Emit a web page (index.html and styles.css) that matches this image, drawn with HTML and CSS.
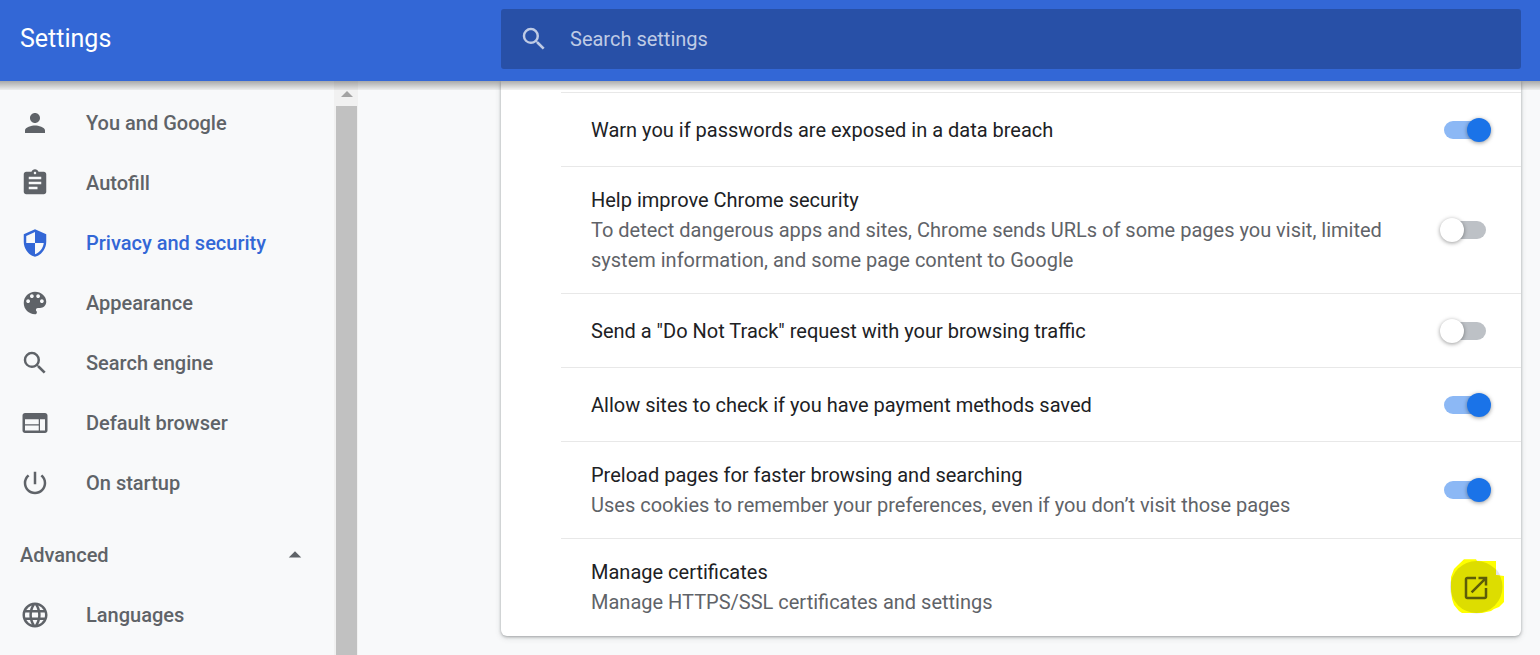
FILE: index.html
```html
<!DOCTYPE html>
<html lang="en">
<head>
<meta charset="utf-8">
<title>Settings</title>
<link rel="stylesheet" href="styles.css">
</head>
<body>
<header class="toolbar">
  <h1 class="toolbar-title">Settings</h1>
  <label class="search">
    <svg class="icon" viewBox="0 0 24 24" aria-hidden="true"><path d="M15.5 14h-.79l-.28-.27A6.471 6.471 0 0 0 16 9.5 6.5 6.5 0 1 0 9.5 16c1.61 0 3.09-.59 4.23-1.57l.27.28v.79l5 4.99L20.49 19l-4.99-5zm-6 0C7.01 14 5 11.99 5 9.5S7.01 5 9.5 5 14 7.01 14 9.5 11.99 14 9.5 14z"/></svg>
    <input class="search-input" type="search" placeholder="Search settings" aria-label="Search settings">
  </label>
</header>
<div class="page">
  <nav class="sidebar" aria-label="Settings sections">
    <div class="menu">
      <a class="menu-item" href="#people"><svg class="icon" viewBox="0 0 24 24" aria-hidden="true"><path d="M12 12c2.21 0 4-1.79 4-4s-1.79-4-4-4-4 1.79-4 4 1.79 4 4 4zm0 2c-2.67 0-8 1.34-8 4v2h16v-2c0-2.66-5.33-4-8-4z"/></svg>You and Google</a>
      <a class="menu-item" href="#autofill"><svg class="icon" viewBox="0 0 24 24" aria-hidden="true"><path d="M19 3h-4.18C14.4 1.84 13.3 1 12 1c-1.3 0-2.4.84-2.82 2H5c-1.1 0-2 .9-2 2v14c0 1.1.9 2 2 2h14c1.1 0 2-.9 2-2V5c0-1.1-.9-2-2-2zm-7 0c.55 0 1 .45 1 1s-.45 1-1 1-1-.45-1-1 .45-1 1-1zm2 14H7v-2h7v2zm3-4H7v-2h10v2zm0-4H7V7h10v2z"/></svg>Autofill</a>
      <a class="menu-item selected" href="#privacy" aria-current="page"><svg class="icon" viewBox="0 0 24 24" aria-hidden="true"><path d="M12 1L3 5v6c0 5.55 3.84 10.74 9 12 5.16-1.26 9-6.45 9-12V5l-9-4zm0 10.99h7c-.53 4.12-3.28 7.79-7 8.94V12H5V6.3l7-3.11v8.8z"/></svg>Privacy and security</a>
      <a class="menu-item" href="#appearance"><svg class="icon" viewBox="0 0 24 24" aria-hidden="true"><path d="M12 3c-4.97 0-9 4.03-9 9s4.03 9 9 9c.83 0 1.5-.67 1.5-1.5 0-.39-.15-.74-.39-1.01-.23-.26-.38-.61-.38-.99 0-.83.67-1.5 1.5-1.5H16c2.76 0 5-2.24 5-5 0-4.42-4.03-8-9-8zm-5.5 9c-.83 0-1.5-.67-1.5-1.5S5.67 9 6.5 9 8 9.67 8 10.5 7.33 12 6.5 12zm3-4C8.67 8 8 7.33 8 6.5S8.67 5 9.5 5s1.5.67 1.5 1.5S10.33 8 9.5 8zm5 0c-.83 0-1.5-.67-1.5-1.5S13.67 5 14.5 5s1.5.67 1.5 1.5S15.33 8 14.5 8zm3 4c-.83 0-1.5-.67-1.5-1.5S16.67 9 17.5 9s1.5.67 1.5 1.5-.67 1.5-1.5 1.5z"/></svg>Appearance</a>
      <a class="menu-item" href="#search"><svg class="icon" viewBox="0 0 24 24" aria-hidden="true"><path d="M15.5 14h-.79l-.28-.27A6.471 6.471 0 0 0 16 9.5 6.5 6.5 0 1 0 9.5 16c1.61 0 3.09-.59 4.23-1.57l.27.28v.79l5 4.99L20.49 19l-4.99-5zm-6 0C7.01 14 5 11.99 5 9.5S7.01 5 9.5 5 14 7.01 14 9.5 11.99 14 9.5 14z"/></svg>Search engine</a>
      <a class="menu-item" href="#browser"><svg class="icon" viewBox="0 0 24 24" aria-hidden="true"><path d="M20 4H4c-1.1 0-1.99.9-1.99 2L2 18c0 1.1.9 2 2 2h16c1.1 0 2-.9 2-2V6c0-1.1-.9-2-2-2zm-5 14H4v-4h11v4zm0-5H4V9h11v4zm5 5h-4V9h4v9z"/></svg>Default browser</a>
      <a class="menu-item" href="#startup"><svg class="icon" viewBox="0 0 24 24" aria-hidden="true"><path d="M13 3h-2v10h2V3zm4.83 2.17l-1.42 1.42A6.92 6.92 0 0 1 19 12c0 3.87-3.13 7-7 7s-7-3.13-7-7c0-2.19 1.01-4.14 2.58-5.42L6.17 5.17A8.932 8.932 0 0 0 3 12a9 9 0 0 0 18 0c0-2.74-1.23-5.18-3.17-6.83z"/></svg>On startup</a>
      <button class="menu-toggle" type="button" aria-expanded="true">Advanced<svg class="icon" viewBox="0 0 24 24" aria-hidden="true"><path d="M7 14l5-5 5 5z"/></svg></button>
      <a class="menu-item" href="#languages"><svg class="icon" viewBox="0 0 24 24" aria-hidden="true"><path d="M11.99 2C6.47 2 2 6.48 2 12s4.47 10 9.99 10C17.52 22 22 17.52 22 12S17.52 2 11.99 2zm6.93 6h-2.95a15.65 15.65 0 0 0-1.38-3.56A8.03 8.03 0 0 1 18.92 8zM12 4.04c.83 1.2 1.48 2.53 1.91 3.96h-3.82c.43-1.43 1.08-2.76 1.91-3.96zM4.26 14C4.1 13.36 4 12.69 4 12s.1-1.36.26-2h3.38c-.08.66-.14 1.32-.14 2 0 .68.06 1.34.14 2H4.26zm.82 2h2.95c.32 1.25.78 2.45 1.38 3.56A7.987 7.987 0 0 1 5.08 16zm2.95-8H5.08a7.987 7.987 0 0 1 4.33-3.56A15.65 15.65 0 0 0 8.03 8zM12 19.96c-.83-1.2-1.48-2.53-1.91-3.96h3.82c-.43 1.43-1.08 2.76-1.91 3.96zM14.34 14H9.66c-.09-.66-.16-1.32-.16-2 0-.68.07-1.35.16-2h4.68c.09.65.16 1.32.16 2 0 .68-.07 1.34-.16 2zm.25 5.56c.6-1.11 1.06-2.31 1.38-3.56h2.95a8.03 8.03 0 0 1-4.33 3.56zM16.36 14c.08-.66.14-1.32.14-2 0-.68-.06-1.34-.14-2h3.38c.16.64.26 1.31.26 2s-.1 1.36-.26 2h-3.38z"/></svg>Languages</a>
    </div>
    <div class="scrollbar" aria-hidden="true">
      <svg class="scroll-arrow" viewBox="0 0 12 6"><path d="M0 6L6 0l6 6z"/></svg>
      <div class="scroll-thumb"></div>
    </div>
  </nav>
  <main class="content">
    <section class="card" aria-label="Privacy and security">
      <div class="row">
        <label class="row-text" for="breach"><span class="row-title">Warn you if passwords are exposed in a data breach</span></label>
        <input class="switch" id="breach" type="checkbox" checked>
      </div>
      <div class="row">
        <label class="row-text" for="improve"><span class="row-title">Help improve Chrome security</span><span class="row-note">To detect dangerous apps and sites, Chrome sends URLs of some pages you visit, limited system information, and some page content to Google</span></label>
        <input class="switch" id="improve" type="checkbox">
      </div>
      <div class="row">
        <label class="row-text" for="dnt"><span class="row-title">Send a "Do Not Track" request with your browsing traffic</span></label>
        <input class="switch" id="dnt" type="checkbox">
      </div>
      <div class="row">
        <label class="row-text" for="payment"><span class="row-title">Allow sites to check if you have payment methods saved</span></label>
        <input class="switch" id="payment" type="checkbox" checked>
      </div>
      <div class="row">
        <label class="row-text" for="preload"><span class="row-title">Preload pages for faster browsing and searching</span><span class="row-note">Uses cookies to remember your preferences, even if you don’t visit those pages</span></label>
        <input class="switch" id="preload" type="checkbox" checked>
      </div>
      <div class="row row-link">
        <div class="row-text"><span class="row-title">Manage certificates</span><span class="row-note">Manage HTTPS/SSL certificates and settings</span></div>
        <button class="open-button" type="button" aria-label="Manage certificates">
          <svg class="marker" viewBox="0 0 56 56" aria-hidden="true">
            <defs>
              <clipPath id="highlight"><path d="M15 .3H27L28 2H47V16L55 17V43L50 48L45 50L42 52L33 54H13L10 52L5 46L3 40L2 30V18L5 10L9 6z"/></clipPath>
            </defs>
            <circle cx="27.5" cy="28" r="26.5" fill="#e4e4e8"/>
            <g clip-path="url(#highlight)">
              <path fill="#ffff00" d="M0 0h56v56H0z"/>
              <circle cx="27.5" cy="28" r="26" fill="#dddd00"/>
            </g>
            <g transform="translate(12 14) scale(1.25)" fill="#5d5d08"><path d="M19 19H5V5h7V3H5c-1.11 0-2 .9-2 2v14c0 1.1.89 2 2 2h14c1.1 0 2-.9 2-2v-7h-2v7zM14 3v2h3.59l-9.83 9.83 1.41 1.41L19 6.41V10h2V3h-7z"/></g>
          </svg>
        </button>
      </div>
    </section>
  </main>
</div>
</body>
</html>
```

FILE: styles.css
```css
* {
  box-sizing: border-box;
}

body {
  margin: 0;
  height: 100vh;
  display: flex;
  flex-direction: column;
  overflow: hidden;
  background: #f8f9fa;
  color: #202124;
  font-family: Roboto, "Liberation Sans", sans-serif;
  font-size: 20px;
  line-height: 30px;
}

button,
input {
  font: inherit;
}

.icon {
  width: 30px;
  height: 30px;
  flex: none;
  fill: currentColor;
}

.toolbar {
  position: relative;
  z-index: 1;
  flex: none;
  display: grid;
  grid-template-columns: 481px 1fr;
  align-items: center;
  padding: 9px 19px 12px 20px;
  background: #3367d6;
  color: #fff;
}

.toolbar::after {
  content: "";
  position: absolute;
  top: 100%;
  left: 0;
  right: 0;
  height: 9px;
  background: linear-gradient(rgba(0, 0, 0, 0.32), rgba(0, 0, 0, 0.05));
}

.toolbar-title {
  margin: 0;
  font-size: 25px;
  font-weight: 400;
  line-height: 32px;
}

.search {
  display: flex;
  align-items: center;
  gap: 21px;
  height: 60px;
  padding: 0 18px;
  border-radius: 3px;
  background: #2850a7;
  color: #bfcbe5;
}

.search-input {
  flex: 1;
  min-width: 0;
  padding: 0;
  border: 0;
  outline: 0;
  background: none;
  color: inherit;
}

.search-input::placeholder {
  color: inherit;
  opacity: 1;
}

.page {
  flex: 1;
  min-height: 0;
  display: grid;
  grid-template-columns: 358px 1fr;
}

.sidebar {
  display: flex;
  overflow: hidden;
}

.menu {
  flex: 1;
  padding-top: 12px;
  color: #5f6368;
  font-weight: 500;
}

.menu-item {
  display: flex;
  align-items: center;
  gap: 36px;
  height: 60px;
  padding-left: 20px;
  color: inherit;
  text-decoration: none;
}

.selected {
  color: #3367d6;
}

.menu-toggle {
  display: flex;
  align-items: center;
  justify-content: space-between;
  width: 100%;
  height: 60px;
  margin-top: 12px;
  padding: 0 24px 0 20px;
  border: 0;
  background: none;
  color: inherit;
}

.scrollbar {
  flex: none;
  display: flex;
  flex-direction: column;
  align-items: center;
  gap: 9px;
  width: 24px;
  padding: 10px 1px 0 2px;
  background: #f1f1f1;
}

.scroll-arrow {
  flex: none;
  width: 12px;
  height: 6px;
  fill: #a3a3a3;
}

.scroll-thumb {
  flex: 1;
  width: 100%;
  background: #c1c1c1;
}

.content {
  padding: 0 19px 19px 143px;
}

.card {
  padding: 11px 0 1px 60px;
  border-radius: 0 0 6px 6px;
  background: #fff;
  box-shadow: 0 1px 3px rgba(60, 64, 67, 0.4), 0 2px 6px rgba(60, 64, 67, 0.15);
}

.row {
  display: flex;
  align-items: center;
  min-height: 74px;
  padding: 18px 35px 18px 30px;
  border-top: 1px solid #e8e8e8;
}

.row-link {
  padding-right: 16px;
}

.row-text {
  flex: 1;
  margin-right: 58px;
}

.row-title,
.row-note {
  display: block;
}

.row-note {
  color: #5f6368;
}

.switch {
  appearance: none;
  position: relative;
  flex: none;
  width: 42px;
  height: 18px;
  margin: 0;
  border-radius: 9px;
  background: #bdc1c6;
}

.switch::before {
  content: "";
  position: absolute;
  top: -3px;
  left: -4px;
  width: 24px;
  height: 24px;
  border-radius: 50%;
  background: #fff;
  box-shadow: 0 1px 4px rgba(0, 0, 0, 0.4);
}

.switch:checked {
  background: #8cb8f5;
}

.switch:checked::before {
  left: 23px;
  background: #1a73e8;
}

.open-button {
  flex: none;
  width: 56px;
  height: 56px;
  padding: 0;
  border: 0;
  background: none;
}

.marker {
  display: block;
  width: 56px;
  height: 56px;
}
```
